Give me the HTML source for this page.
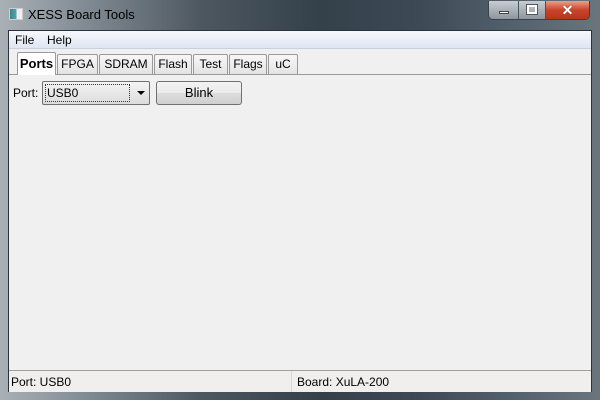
<!DOCTYPE html>
<html><head><style>
*{margin:0;padding:0;box-sizing:border-box}
body{width:600px;height:400px;overflow:hidden;font-family:"Liberation Sans",sans-serif;font-size:12px;color:#000;position:relative;
background:linear-gradient(90deg,#a9b0b6 0px,#8d969e 60px,#4d5861 200px,#34404a 320px,#3d4a55 420px,#55636e 520px,#6a757e 600px);}
.abs{position:absolute}
#client{left:8px;top:30px;width:584px;height:362px;background:#f0f0f0;border:1px solid #2a333a}
#menu{left:0;top:0;width:582px;height:18px;background:linear-gradient(#f6f8fc,#dfe5f2);border-bottom:1px solid #c9cfdc}
#menu span{position:absolute;top:2px}
.tab{position:absolute;top:23px;height:20px;border:1px solid #9a9a9a;border-bottom:none;background:linear-gradient(#f7f7f7,#e3e3e3);font-size:12px;text-align:center;line-height:18px;border-radius:2px 2px 0 0}
.tab.sel{top:21px;height:23px;background:#fff;font-weight:bold;font-size:13px;line-height:22px;z-index:2}
#tabline{left:0;top:43px;width:582px;height:1px;background:#9a9a9a}
#combo{left:33px;top:50px;width:108px;height:24px;border:1px solid #707070;border-radius:2px;background:linear-gradient(#f4f4f4,#dcdcdc)}
#btn{left:147px;top:50px;width:86px;height:24px;border:1px solid #707070;border-radius:3px;background:linear-gradient(#f2f2f2 0,#ebebeb 50%,#dddddd 51%,#cfcfcf);text-align:center;line-height:22px;font-size:13px}
#status{left:0;top:339px;width:582px;height:22px;border-top:1px solid #a0a0a0;background:#f0efed}
</style></head><body>
<div class="abs" style="left:9px;top:8px;width:14px;height:12px;background:linear-gradient(90deg,#3a8a7a 0,#5aa0c0 55%,#eee 56%);border:1px solid #ccc"></div>
<div class="abs" style="left:28px;top:7px;font-size:13px;color:#000">XESS Board Tools</div>
<div class="abs" style="left:488px;top:1px;width:102px;height:19px;border:1px solid #3a4148;border-top:none;border-radius:0 0 5px 5px;overflow:hidden;display:flex">
 <div style="width:30px;background:linear-gradient(#c7ccd2,#8d969f);border-right:1px solid #4a525a;position:relative"><div class="abs" style="left:10px;top:10px;width:10px;height:3px;background:#fff;border:1px solid #444"></div></div>
 <div style="width:27px;background:linear-gradient(#c7ccd2,#8d969f);border-right:1px solid #4a525a;position:relative"><div class="abs" style="left:8px;top:4px;width:10px;height:9px;border:2px solid #fff;outline:1px solid #555"></div></div>
 <div style="flex:1;background:linear-gradient(#e8a08a,#c8452a 50%,#b8341c);color:#fff;font-weight:bold;font-size:14px;text-align:center;line-height:18px;text-shadow:0 0 1px #333">✕</div>
</div>
<div id="client" class="abs">
 <div id="menu" class="abs"><span style="left:6px">File</span><span style="left:38px">Help</span></div>
 <div id="tabline" class="abs"></div>
 <div class="tab sel" style="left:8px;width:39px">Ports</div>
 <div class="tab" style="left:48px;width:41px">FPGA</div>
 <div class="tab" style="left:90px;width:54px">SDRAM</div>
 <div class="tab" style="left:145px;width:38px">Flash</div>
 <div class="tab" style="left:184px;width:35px">Test</div>
 <div class="tab" style="left:220px;width:38px">Flags</div>
 <div class="tab" style="left:259px;width:30px">uC</div>
 <div class="abs" style="left:4px;top:55px">Port:</div>
 <div id="combo" class="abs"><div class="abs" style="left:2px;top:2px;width:85px;height:18px;border:1px dotted #333;padding-left:1px;line-height:16px">USB0</div>
  <div class="abs" style="left:94px;top:9px;width:0;height:0;border-left:4px solid transparent;border-right:4px solid transparent;border-top:4px solid #000"></div></div>
 <div id="btn" class="abs">Blink</div>
 <div id="status" class="abs">
  <div class="abs" style="left:2px;top:4px">Port: USB0</div>
  <div class="abs" style="left:282px;top:0;width:1px;height:21px;background:#d8d8d8"></div>
  <div class="abs" style="left:288px;top:4px">Board: XuLA-200</div>
 </div>
</div>
</body></html>
